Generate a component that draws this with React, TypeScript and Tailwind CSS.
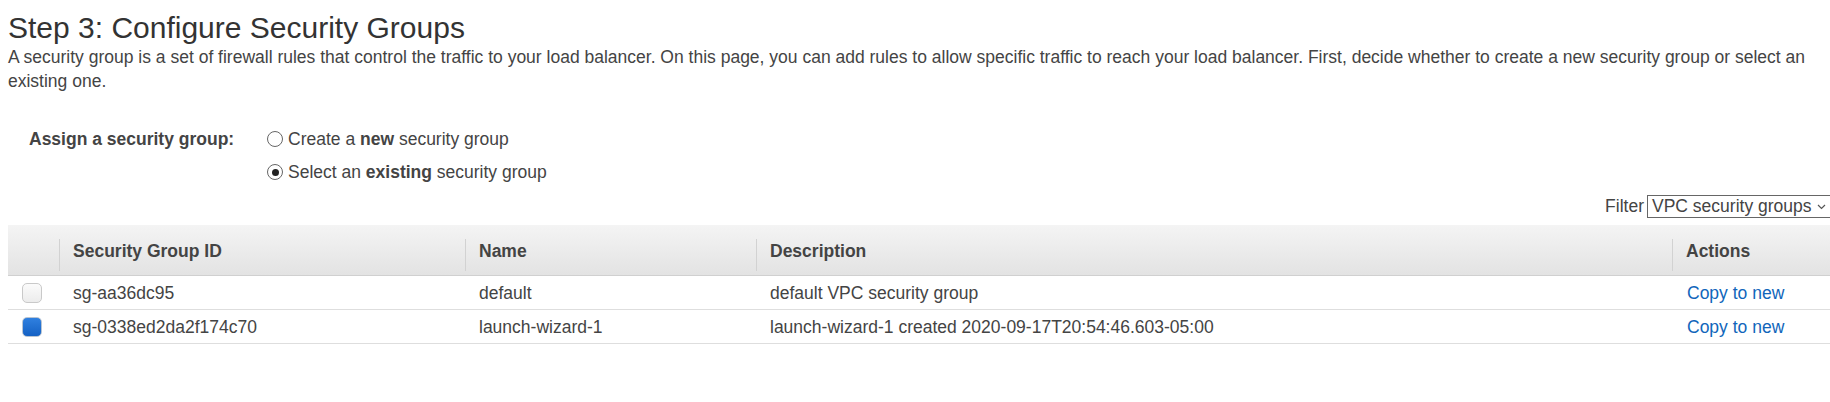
import React from 'react';

const rows = [
  { id: 'sg-aa36dc95', name: 'default', desc: 'default VPC security group', checked: false },
  {
    id: 'sg-0338ed2da2f174c70',
    name: 'launch-wizard-1',
    desc: 'launch-wizard-1 created 2020-09-17T20:54:46.603-05:00',
    checked: true,
  },
];

const Radio: React.FC<{ checked?: boolean }> = ({ checked }) => (
  <span className="w-[16px] h-[16px] rounded-full border border-[#666] bg-white flex items-center justify-center shrink-0">
    {checked && <span className="w-[7px] h-[7px] rounded-full bg-[#222]" />}
  </span>
);

const HeaderCell: React.FC<{ label: string; className: string }> = ({ label, className }) => (
  <div className={`flex h-full ${className}`}>
    <div className="w-px h-[32px] mt-[14px] bg-[#d2d2d2] shrink-0" />
    <div className="pl-[13px] pt-[2px] flex items-center font-bold text-[#444]">{label}</div>
  </div>
);

const App: React.FC = () => {
  return (
    <div className="w-full h-[402px] overflow-hidden bg-white text-[#444] font-['Liberation_Sans',Arial,sans-serif] text-[17.5px] leading-[24px]">
      <div className="pl-[8px] pr-[8px] pt-[11px]">
        <h1 className="text-[30px] leading-[33px] text-[#333] font-normal">Step 3: Configure Security Groups</h1>
        <p className="mt-[1px] text-[#444]">
          A security group is a set of firewall rules that control the traffic to your load balancer. On this page, you can add
          rules to allow specific traffic to reach your load balancer. First, decide whether to create a new security group or
          select an existing one.
        </p>
      </div>

      {/* assign security group */}
      <div className="mt-[34px] flex pl-[29px]">
        <div className="w-[238px] font-bold text-[#444]">Assign a security group:</div>
        <div className="flex flex-col gap-[9px]">
          <label className="flex items-center gap-[5px]">
            <Radio />
            <span>
              Create a <b>new</b> security group
            </span>
          </label>
          <label className="flex items-center gap-[5px]">
            <Radio checked />
            <span>
              Select an <b>existing</b> security group
            </span>
          </label>
        </div>
      </div>

      {/* filter */}
      <div className="mt-[10px] flex justify-end items-center">
        <span className="mr-[3px]">Filter</span>
        <div className="w-[190px] h-[23px] mr-[-7px] border border-[#666] flex items-center pl-[4px] pr-[10px] justify-between">
          <span>VPC security groups</span>
          <svg width="9" height="6" viewBox="0 0 9 6" className="mt-[2px]">
            <path d="M1 1 L4.5 4.5 L8 1" fill="none" stroke="#555" strokeWidth="1.2" />
          </svg>
        </div>
      </div>

      {/* table */}
      <div className="mt-[7px] ml-[8px]">
        <div className="flex h-[51px] bg-gradient-to-b from-[#f4f4f4] to-[#e3e3e3] border-b border-[#d0d0d0]">
          <div className="w-[51px] shrink-0" />
          <HeaderCell label="Security Group ID" className="w-[406px] shrink-0" />
          <HeaderCell label="Name" className="w-[291px] shrink-0" />
          <HeaderCell label="Description" className="w-[916px] shrink-0" />
          <HeaderCell label="Actions" className="flex-1" />
        </div>
        {rows.map((r) => (
          <div key={r.id} className="flex h-[34px] items-center border-b border-[#dedede]">
            <div className="w-[51px] shrink-0 pl-[14px] flex items-center">
              {r.checked ? (
                <span className="w-[20px] h-[20px] rounded-[5px] border border-[#b8c4d2] bg-gradient-to-b from-[#2f80e0] to-[#1461c4]" />
              ) : (
                <span className="w-[20px] h-[20px] rounded-[5px] border border-[#c9c9c9] bg-gradient-to-b from-[#fbfbfb] to-[#ececec]" />
              )}
            </div>
            <div className="w-[406px] shrink-0 pl-[14px]">{r.id}</div>
            <div className="w-[291px] shrink-0 pl-[14px]">{r.name}</div>
            <div className="w-[916px] shrink-0 pl-[14px]">{r.desc}</div>
            <div className="flex-1 pl-[15px]">
              <a href="#" className="text-[#1166bb]">
                Copy to new
              </a>
            </div>
          </div>
        ))}
      </div>
    </div>
  );
};

export default App;
